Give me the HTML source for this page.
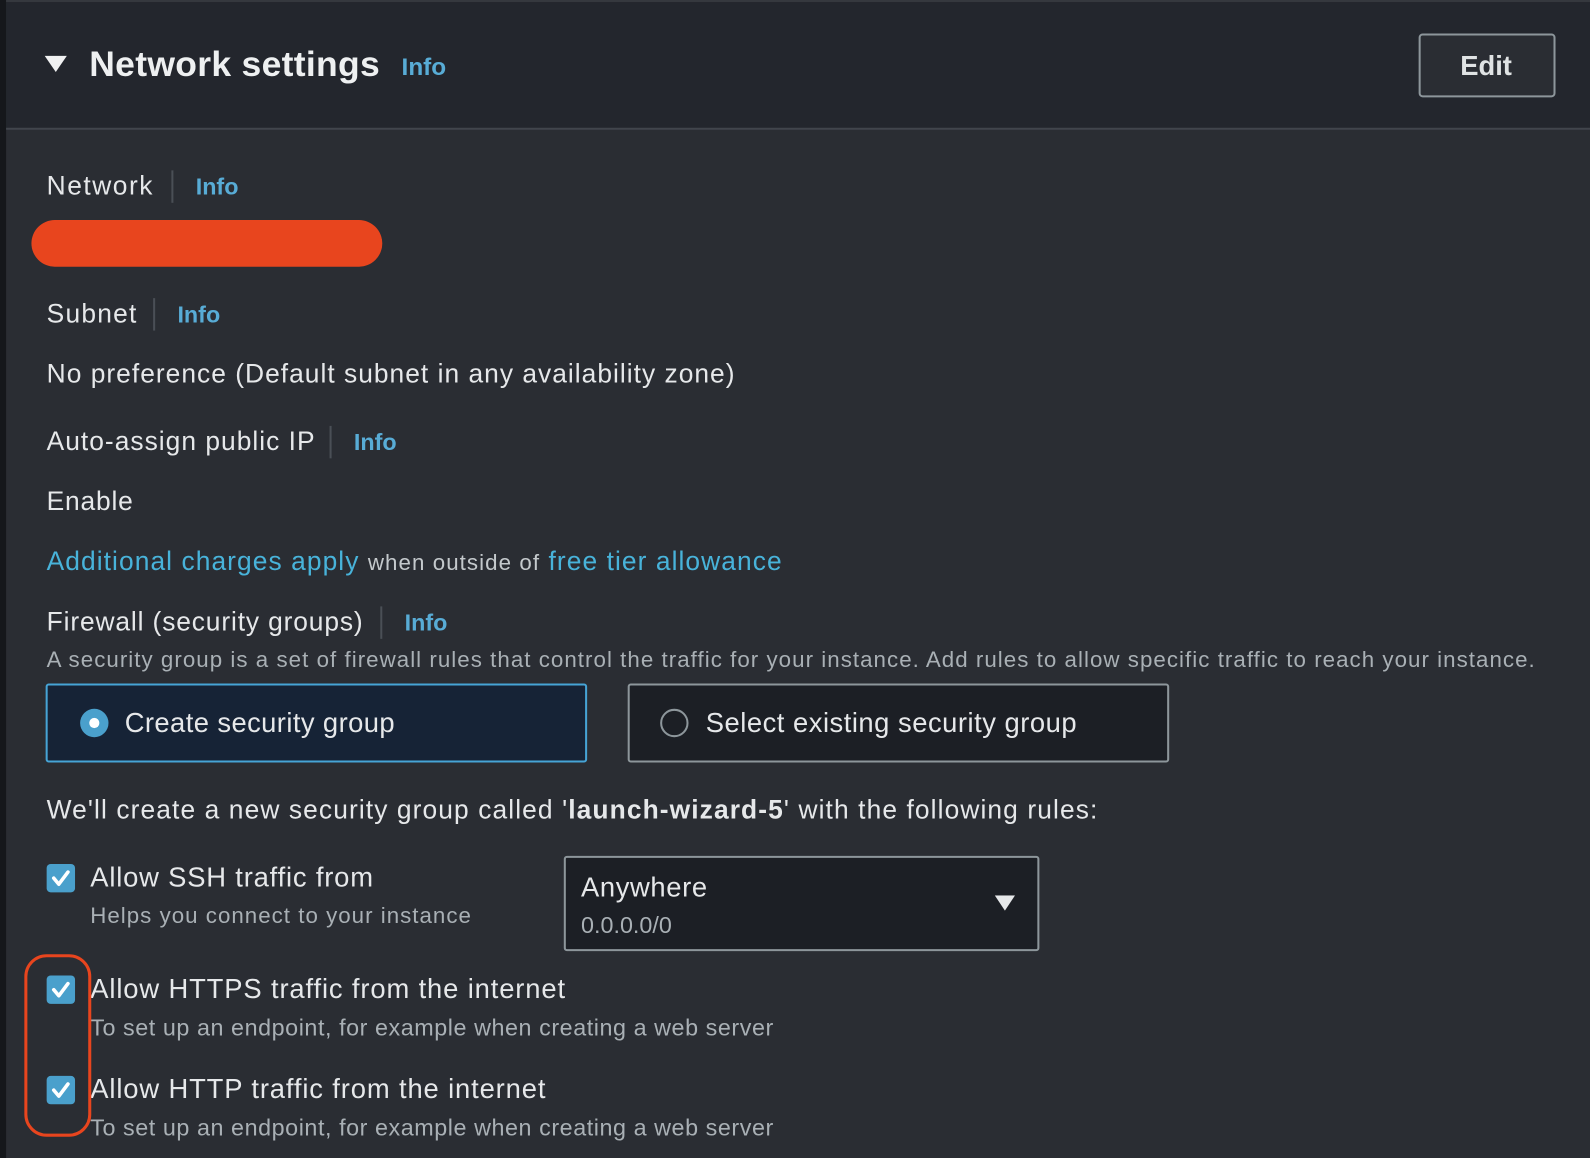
<!DOCTYPE html>
<html><head><meta charset="utf-8"><style>
*{margin:0;padding:0;box-sizing:border-box}
html,body{width:1590px;height:1158px;overflow:hidden;background:#2a2d33;font-family:"Liberation Sans",sans-serif;color:#e6e8ea}
#w{position:absolute;left:0;top:0;width:1568px;height:1142px;transform:scale(1.01403);transform-origin:0 0}
.a{position:absolute;white-space:nowrap;line-height:1}
.info{color:#58acd6;font-weight:bold}
.sep{position:absolute;width:2px;background:#4a4f56}
.sub{color:#a9b0b5}
.cb{position:absolute;width:28px;height:28px;background:#4aa0cc;border-radius:4px}
</style></head><body>
<div id="w">
<div style="position:absolute;left:0;top:0;width:6px;height:1142px;background:#15171b"></div>
<div style="position:absolute;left:6px;top:0;width:1562px;height:128px;background:#23262d;border-top:2px solid #35383e;border-bottom:2px solid #41454c"></div>
<svg class="a" style="left:44px;top:55px" width="22" height="16"><polygon points="0,0 22,0 11,16" fill="#f0f1f2"/></svg>
<div class="a" style="left:88px;top:46px;font-size:35px;font-weight:bold;color:#eef0f1;letter-spacing:0.3px">Network settings</div>
<div class="a info" style="left:396px;top:55px;font-size:24px">Info</div>
<div style="position:absolute;left:1399px;top:33px;width:135px;height:63px;border:2px solid #8d969b;border-radius:4px;background:#2a2d33"></div>
<div class="a" style="left:1440px;top:52px;font-size:27px;font-weight:bold;color:#e0e3e4">Edit</div>

<div class="a" style="left:46px;top:170px;font-size:26px;letter-spacing:1.5px">Network</div>
<div class="sep" style="left:169px;top:168px;height:32px"></div>
<div class="a info" style="left:193px;top:173px;font-size:23px">Info</div>
<div style="position:absolute;left:31px;top:217px;width:346px;height:46px;border-radius:23px;background:#e8451e"></div>

<div class="a" style="left:46px;top:296px;font-size:26px;letter-spacing:1.2px">Subnet</div>
<div class="sep" style="left:151px;top:294px;height:32px"></div>
<div class="a info" style="left:175px;top:299px;font-size:23px">Info</div>
<div class="a" style="left:46px;top:355px;font-size:26px;letter-spacing:1.0px">No preference (Default subnet in any availability zone)</div>

<div class="a" style="left:46px;top:422px;font-size:26px;letter-spacing:1.0px">Auto-assign public IP</div>
<div class="sep" style="left:325px;top:420px;height:32px"></div>
<div class="a info" style="left:349px;top:425px;font-size:23px">Info</div>
<div class="a" style="left:46px;top:481px;font-size:26px;letter-spacing:0.8px">Enable</div>
<div class="a" style="left:46px;top:540px;font-size:26px;color:#48b3da;letter-spacing:1.05px">Additional charges apply <span style="font-size:22px;color:#c4c9cc">when outside of</span> free tier allowance</div>

<div class="a" style="left:46px;top:600px;font-size:26px;letter-spacing:0.85px">Firewall (security groups)</div>
<div class="sep" style="left:375px;top:598px;height:32px"></div>
<div class="a info" style="left:399px;top:603px;font-size:23px">Info</div>
<div class="a sub" style="left:46px;top:640px;font-size:22px;letter-spacing:1.02px">A security group is a set of firewall rules that control the traffic for your instance. Add rules to allow specific traffic to reach your instance.</div>

<div style="position:absolute;left:45px;top:674px;width:534px;height:78px;border:2px solid #46a4d6;border-radius:3px;background:#162336"></div>
<div style="position:absolute;left:79px;top:699px;width:28px;height:28px;border-radius:50%;background:#4aa0cc"></div>
<div style="position:absolute;left:88px;top:708px;width:10px;height:10px;border-radius:50%;background:#fff"></div>
<div class="a" style="left:123px;top:700px;font-size:27px;letter-spacing:0.4px">Create security group</div>
<div style="position:absolute;left:619px;top:674px;width:534px;height:78px;border:2px solid #8d969b;border-radius:3px;background:#1c1f25"></div>
<div style="position:absolute;left:651px;top:699px;width:28px;height:28px;border-radius:50%;border:2px solid #8d969b"></div>
<div class="a" style="left:696px;top:700px;font-size:27px;letter-spacing:0.5px">Select existing security group</div>

<div class="a" style="left:46px;top:785px;font-size:26px;letter-spacing:1.08px">We'll create a new security group called '<b>launch-wizard-5</b>' with the following rules:</div>

<div class="cb" style="left:46px;top:852px"></div>
<svg class="a" style="left:46px;top:852px" width="28" height="28"><path d="M7 14 L12 20 L21 8" stroke="#fff" stroke-width="3.5" fill="none" stroke-linecap="round" stroke-linejoin="round"/></svg>
<div class="a" style="left:89px;top:852px;font-size:27px;letter-spacing:0.8px">Allow SSH traffic from</div>
<div class="a sub" style="left:89px;top:892px;font-size:22px;letter-spacing:1.0px">Helps you connect to your instance</div>
<div style="position:absolute;left:556px;top:844px;width:469px;height:94px;border:2px solid #8d969b;border-radius:3px;background:#1c1f25"></div>
<div class="a" style="left:573px;top:862px;font-size:27px;letter-spacing:0.6px">Anywhere</div>
<div class="a sub" style="left:573px;top:901px;font-size:23px">0.0.0.0/0</div>
<svg class="a" style="left:981px;top:883px" width="20" height="16"><polygon points="0,0 20,0 10,15" fill="#e6e8ea"/></svg>

<div class="cb" style="left:46px;top:962px"></div>
<svg class="a" style="left:46px;top:962px" width="28" height="28"><path d="M7 14 L12 20 L21 8" stroke="#fff" stroke-width="3.5" fill="none" stroke-linecap="round" stroke-linejoin="round"/></svg>
<div class="a" style="left:89px;top:962px;font-size:27px;letter-spacing:0.85px">Allow HTTPS traffic from the internet</div>
<div class="a sub" style="left:89px;top:1002px;font-size:23px;letter-spacing:0.55px">To set up an endpoint, for example when creating a web server</div>

<div class="cb" style="left:46px;top:1061px"></div>
<svg class="a" style="left:46px;top:1061px" width="28" height="28"><path d="M7 14 L12 20 L21 8" stroke="#fff" stroke-width="3.5" fill="none" stroke-linecap="round" stroke-linejoin="round"/></svg>
<div class="a" style="left:89px;top:1061px;font-size:27px;letter-spacing:0.85px">Allow HTTP traffic from the internet</div>
<div class="a sub" style="left:89px;top:1101px;font-size:23px;letter-spacing:0.55px">To set up an endpoint, for example when creating a web server</div>

<div style="position:absolute;left:24px;top:941px;width:66px;height:180px;border:3px solid #e8451e;border-radius:22px"></div>
</div>
</body></html>
